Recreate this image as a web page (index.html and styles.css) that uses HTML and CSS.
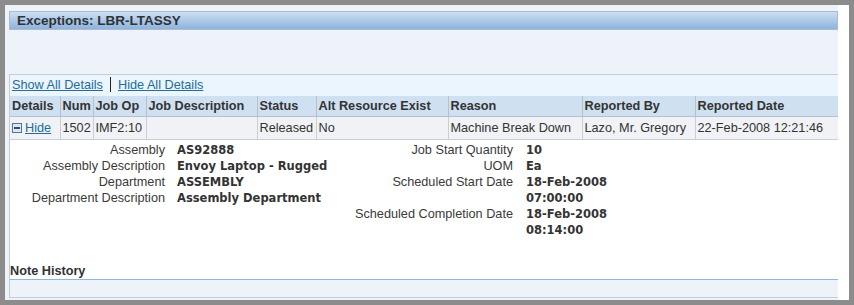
FILE: index.html
```html
<!DOCTYPE html>
<html>
  <head>
    <meta http-equiv="Content-type" content="text/html; charset=utf-8" />
    <link rel="stylesheet" href="styles.css">
  </head>
  <body>
    <div id="frame">
      <div class="panel">
        <div class="hdr">Exceptions: LBR-LTASSY</div>
        <div class="box">
          <div class="links"><a href="#">Show All Details</a><span class="sep"></span><a href="#">Hide All Details</a></div>
          <table class="grid">
            <tr>
              <th class="c1">Details</th>
              <th class="c2">Num</th>
              <th class="c3">Job Op</th>
              <th class="c4">Job Description</th>
              <th class="c5">Status</th>
              <th class="c6">Alt Resource Exist</th>
              <th class="c7">Reason</th>
              <th class="c8">Reported By</th>
              <th>Reported Date</th>
            </tr>
            <tr>
              <td><span class="minus"></span><a href="#">Hide</a></td>
              <td>1502</td>
              <td>IMF2:10</td>
              <td></td>
              <td>Released</td>
              <td>No</td>
              <td>Machine Break Down</td>
              <td>Lazo, Mr. Gregory</td>
              <td>22-Feb-2008 12:21:46</td>
            </tr>
          </table>
          <div class="detail">
            <div class="pairs left">
              <span class="lbl">Assembly</span><span class="val">AS92888</span>
              <span class="lbl">Assembly Description</span><span class="val">Envoy Laptop - Rugged</span>
              <span class="lbl">Department</span><span class="val">ASSEMBLY</span>
              <span class="lbl">Department Description</span><span class="val">Assembly Department</span>
            </div>
            <div class="pairs right">
              <span class="lbl">Job Start Quantity</span><span class="val">10</span>
              <span class="lbl">UOM</span><span class="val">Ea</span>
              <span class="lbl two">Scheduled Start Date</span><span class="val two">18-Feb-2008<br/>07:00:00</span>
              <span class="lbl two">Scheduled Completion Date</span><span class="val two">18-Feb-2008<br/>08:14:00</span>
            </div>
          </div>
          <div class="note">Note History</div>
          <div class="noteband"></div>
        </div>
      </div>
    </div>
  </body>
</html>
```

FILE: styles.css
```css
/* base */
html,body{margin:0;padding:0;height:100%;}
body{background:#8c8c8c;font-family:"Liberation Sans",Arial,sans-serif;font-size:12.7px;color:#333;}
table{border-collapse:collapse;border-spacing:0;}
a{color:#236c9c;text-decoration:underline;}

/* frame */
#frame {margin:5px;height:295px;background:#fff;}
.panel {margin-right:11px;height:295px;background:#eef2f9;padding:6px 0 0 4px;box-sizing:border-box;}

.hdr {height:17px;line-height:17px;padding-left:7px;font-size:13.5px;font-weight:bold;color:#2f3237;
	border:1px solid #a9bcd3;
	background: linear-gradient(to bottom, #cddff2 0%, #a9c6e6 55%, #8fb3dc 100%);}

.box {margin-top:44px;height:224px;background:#fff;border:1px solid #c6ccd6;border-right:0;box-sizing:border-box;}

.links {height:21px;line-height:20px;padding-left:2px;background:#eaf5fd;}
.links .sep {display:inline-block;width:1px;height:15px;background:#222;margin:0 7px 0 7px;vertical-align:-3px;}

/* table */
.grid {width:100%;table-layout:fixed;}
.grid th, .grid td {box-sizing:border-box;white-space:nowrap;overflow:hidden;}
.grid th {height:20px;padding:0 0 0 2px;text-align:left;font-weight:bold;background:#cfe0f1;border:1px solid #b3c1d3;border-top:0;}
.grid td {height:23px;padding:0 0 0 2px;background:#f0f2f6;border:1px solid #c9cfd9;border-top:0;}
.grid th:first-child, .grid td:first-child {border-left:0;}
.grid td:last-child, .grid th:last-child {border-right:0;}
.c1 {width:50px;}
.c2 {width:33px;}
.c3 {width:53px;}
.c4 {width:111px;}
.c5 {width:59px;}
.c6 {width:132px;}
.c7 {width:134px;}
.c8 {width:113px;}
.minus {display:inline-block;width:8px;height:8px;border:1px solid #4f77a2;background:#dbe7f4;position:relative;vertical-align:-1px;margin-right:3px;}
.minus:after {content:"";position:absolute;left:1px;top:3px;width:6px;height:2px;background:#2b4f7a;}

/* detail */
.detail {display:flex;padding-top:2px;}
.pairs {display:grid;grid-auto-rows:16px;line-height:16px;align-content:start;}
.pairs .lbl {text-align:right;color:#3a3a3a;white-space:nowrap;}
.pairs .val {font-family:"DejaVu Sans",Verdana,sans-serif;font-size:11.5px;font-weight:bold;color:#333;white-space:nowrap;}
.pairs .two {grid-row:span 2;}
.left {grid-template-columns:155px 163px;column-gap:12px;}
.right {grid-template-columns:173px auto;column-gap:13px;}

.note {margin-top:26px;height:15px;line-height:15px;font-weight:bold;font-size:12.7px;color:#2f3237;border-bottom:1px solid #8cb8df;}
.noteband {height:17px;background:#eef2f9;}
```
